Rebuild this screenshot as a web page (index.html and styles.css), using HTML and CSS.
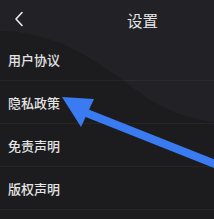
FILE: index.html
```html
<!DOCTYPE html>
<html lang="zh-CN">
<head>
    <meta charset="UTF-8">
    <meta name="viewport" content="width=device-width, initial-scale=1.0">
    <title>设置</title>
    <link rel="stylesheet" href="styles.css">
</head>
<body>
    <div class="screen">
        <!-- background wave -->
        <svg class="wave" width="214" height="219" viewBox="0 0 214 219">
            <path d="M0,0 H214 V122 C192,119 170,112 150,100 C122,80 92,56 60,43 C36,34 16,31 0,31 Z" fill="#222226"/>
        </svg>

        <div class="header">
            <div class="back">
                <svg width="10" height="16" viewBox="0 0 10 16">
                    <path d="M8,1.5 L2,8 L8,14.5" fill="none" stroke="#ececec" stroke-width="1.6" stroke-linecap="round" stroke-linejoin="round"/>
                </svg>
            </div>
            <div class="title">设置</div>
        </div>

        <div class="menu">
            <div class="menu-item">用户协议</div>
            <div class="menu-item">隐私政策</div>
            <div class="menu-item">免责声明</div>
            <div class="menu-item">版权声明</div>
        </div>

        <!-- pointer arrow -->
        <svg class="arrow" width="214" height="219" viewBox="0 0 214 219">
            <line x1="84" y1="112" x2="220" y2="166" stroke="#3a7bf2" stroke-width="8"/>
            <polygon points="62,97 94,99 81,127" fill="#3a7bf2"/>
        </svg>
    </div>
</body>
</html>
```

FILE: styles.css
```css
body {
    margin: 0;
    background-color: #1c1c1e;
    font-family: "Noto Sans CJK SC", "Noto Sans", sans-serif;
    color: #e4e4e4;
}

.screen {
    position: relative;
    width: 214px;
    height: 219px;
    overflow: hidden;
}

.wave, .arrow {
    position: absolute;
    left: 0;
    top: 0;
}

.arrow {
    z-index: 2;
}

.header, .menu {
    position: relative;
    z-index: 1;
}

.header {
    height: 38px;
    display: flex;
    align-items: center;
}

.back {
    width: 14px;
    height: 16px;
    margin-left: 14px;
    display: flex;
    align-items: center;
}

.title {
    margin-left: 99px;
    font-size: 15.5px;
    line-height: 16px;
    padding-top: 2px;
}

.menu-item {
    height: 43px;
    box-sizing: border-box;
    display: flex;
    align-items: center;
    padding-left: 8px;
    font-size: 13px;
    font-weight: 500;
    border-bottom: 1px solid rgba(255, 255, 255, 0.045);
}
```
